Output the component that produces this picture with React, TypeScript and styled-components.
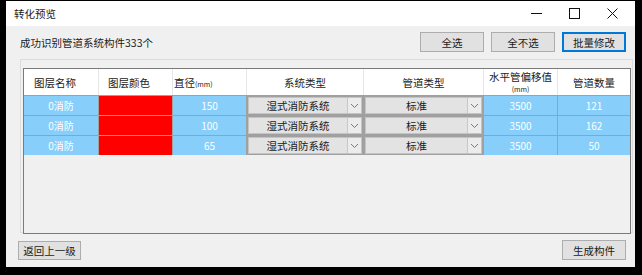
import styled, { createGlobalStyle } from "styled-components";

const GlobalStyle = createGlobalStyle`
  html, body {
    margin: 0;
    padding: 0;
    background: #000;
  }
  body {
    font-family: "Noto Sans CJK SC", "Microsoft YaHei", sans-serif;
    font-size: 10.5px;
    color: #000;
  }
`;

const Screen = styled.div`
  width: 642px;
  height: 275px;
  padding: 1px 0 0 6px;
  box-sizing: border-box;
  overflow: hidden;
`;

const Window = styled.div`
  width: 629px;
  height: 266px;
  background: #f0f0f0;
  display: flex;
  flex-direction: column;
`;

const TitleBar = styled.div`
  height: 25px;
  background: #fff;
  display: flex;
  align-items: center;
  justify-content: space-between;
  padding: 0 4px 0 8px;
`;

const Title = styled.span`
  font-size: 10.5px;
  color: #1a1a1a;
`;

const Controls = styled.div`
  display: flex;
  height: 100%;
`;

const ControlButton = styled.div`
  width: 38px;
  height: 100%;
  display: flex;
  align-items: center;
  justify-content: center;
`;

const Body = styled.div`
  flex: 1;
  display: flex;
  flex-direction: column;
  padding: 6px 9px 7px 12px;
`;

const TopRow = styled.div`
  display: flex;
  align-items: center;
  height: 20px;
`;

const Status = styled.span`
  flex: 1;
  padding-left: 2px;
  font-size: 10.5px;
  color: #1a1a1a;
`;

const Button = styled.button<{ $focused?: boolean; $width?: number }>`
  width: ${(p) => p.$width ?? 64}px;
  height: 20px;
  margin-left: 7px;
  padding: 0;
  background: #e1e1e1;
  border: 1px solid ${(p) => (p.$focused ? "#0078d7" : "#adadad")};
  box-shadow: ${(p) => (p.$focused ? "inset 0 0 0 1px #0078d7" : "none")};
  font-family: inherit;
  font-size: 10.5px;
  color: #1a1a1a;
  &:first-of-type {
    margin-left: 0;
  }
`;

const Panel = styled.div`
  margin: 7px -7px 0 2px;
  height: 174px;
  border: 1px solid #dcdcdc;
  padding: 8px 1px 0 2px;
  box-sizing: border-box;
`;

const Grid = styled.div`
  height: 166px;
  border: 1px solid #7a7a7a;
  background: #f0f0f0;
  box-sizing: border-box;
`;

const cols = "74px 74px 74px 117px 120px 74px 1fr";

const HeaderRow = styled.div`
  display: grid;
  grid-template-columns: ${cols};
  height: 26px;
  background: #fff;
`;

const HeaderCell = styled.div<{ $align?: "left" | "center"; $pad?: number }>`
  display: flex;
  flex-direction: column;
  align-items: ${(p) => (p.$align === "left" ? "flex-start" : "center")};
  justify-content: center;
  padding-left: ${(p) => p.$pad ?? 0}px;
  border-left: 1px solid #e6e6e6;
  line-height: 15px;
  font-size: 10.5px;
  color: #222;
  overflow: hidden;
  &:first-child {
    border-left: none;
  }
`;

const Unit = styled.span`
  font-size: 7px;
  line-height: 11px;
`;

const DataRow = styled.div`
  display: grid;
  grid-template-columns: ${cols};
  height: 20px;
  border-top: 1px solid #a0a0a0;
  box-sizing: border-box;
`;

const Cell = styled.div<{ $bg?: string }>`
  background: ${(p) => p.$bg ?? "#87cefa"};
  border-left: 1px solid #a0a0a0;
  display: flex;
  align-items: center;
  justify-content: center;
  color: #fff;
  font-size: 10px;
  &:first-child {
    border-left: none;
  }
`;

const ComboCell = styled.div`
  border-left: 1px solid #a0a0a0;
  background: #a0a0a0;
  padding: 1px;
  display: flex;
`;

const Combo = styled.div`
  flex: 1;
  display: flex;
  background: #e3e3e3;
  border: 1px solid #c4c4c4;
`;

const ComboText = styled.span`
  flex: 1;
  display: flex;
  align-items: center;
  justify-content: center;
  font-size: 10.5px;
  color: #1a1a1a;
`;

const ComboArrow = styled.span`
  width: 13px;
  border-left: 1px solid #c8c8c8;
  background: #ececec;
  display: flex;
  align-items: center;
  justify-content: center;
`;

const BottomRow = styled.div`
  display: flex;
  justify-content: space-between;
  align-items: center;
  margin-top: 7px;
`;

const BackButton = styled(Button)`
  height: 19px;
`;

const Chevron = () => (
  <svg width="9" height="6" viewBox="0 0 9 6">
    <path d="M1 1 L4.5 4.5 L8 1" fill="none" stroke="#7a7a7a" strokeWidth="1" />
  </svg>
);

const rows = [
  { layer: "0消防", dia: "150", sys: "湿式消防系统", pipe: "标准", offset: "3500", count: "121" },
  { layer: "0消防", dia: "100", sys: "湿式消防系统", pipe: "标准", offset: "3500", count: "162" },
  { layer: "0消防", dia: "65", sys: "湿式消防系统", pipe: "标准", offset: "3500", count: "50" },
];

const App = () => {
  return (
    <Screen>
      <GlobalStyle />
      <Window>
        <TitleBar>
          <Title>转化预览</Title>
          <Controls>
            <ControlButton>
              <svg width="11" height="11" viewBox="0 0 11 11">
                <path d="M0 5.5 H11" stroke="#111" strokeWidth="1" />
              </svg>
            </ControlButton>
            <ControlButton>
              <svg width="11" height="11" viewBox="0 0 11 11">
                <rect x="0.5" y="0.5" width="10" height="10" fill="none" stroke="#111" strokeWidth="1" />
              </svg>
            </ControlButton>
            <ControlButton>
              <svg width="11" height="11" viewBox="0 0 11 11">
                <path d="M0.5 0.5 L10.5 10.5 M10.5 0.5 L0.5 10.5" stroke="#111" strokeWidth="1" />
              </svg>
            </ControlButton>
          </Controls>
        </TitleBar>
        <Body>
          <TopRow>
            <Status>成功识别管道系统构件333个</Status>
            <Button>全选</Button>
            <Button>全不选</Button>
            <Button $focused>批量修改</Button>
          </TopRow>
          <Panel>
            <Grid>
              <HeaderRow>
                <HeaderCell $align="left" $pad={10}>图层名称</HeaderCell>
                <HeaderCell $align="left" $pad={9}>图层颜色</HeaderCell>
                <HeaderCell $align="left" $pad={1}>
                  <span>
                    直径<Unit>(mm)</Unit>
                  </span>
                </HeaderCell>
                <HeaderCell>系统类型</HeaderCell>
                <HeaderCell>管道类型</HeaderCell>
                <HeaderCell>
                  <span>水平管偏移值</span>
                  <Unit>(mm)</Unit>
                </HeaderCell>
                <HeaderCell>管道数量</HeaderCell>
              </HeaderRow>
              {rows.map((r, i) => (
                <DataRow key={i}>
                  <Cell>{r.layer}</Cell>
                  <Cell $bg="#ff0000" />
                  <Cell>{r.dia}</Cell>
                  <ComboCell>
                    <Combo>
                      <ComboText>{r.sys}</ComboText>
                      <ComboArrow>
                        <Chevron />
                      </ComboArrow>
                    </Combo>
                  </ComboCell>
                  <ComboCell>
                    <Combo>
                      <ComboText>{r.pipe}</ComboText>
                      <ComboArrow>
                        <Chevron />
                      </ComboArrow>
                    </Combo>
                  </ComboCell>
                  <Cell>{r.offset}</Cell>
                  <Cell>{r.count}</Cell>
                </DataRow>
              ))}
            </Grid>
          </Panel>
          <BottomRow>
            <BackButton $width={63}>返回上一级</BackButton>
            <Button $width={64}>生成构件</Button>
          </BottomRow>
        </Body>
      </Window>
    </Screen>
  );
};

export default App;
